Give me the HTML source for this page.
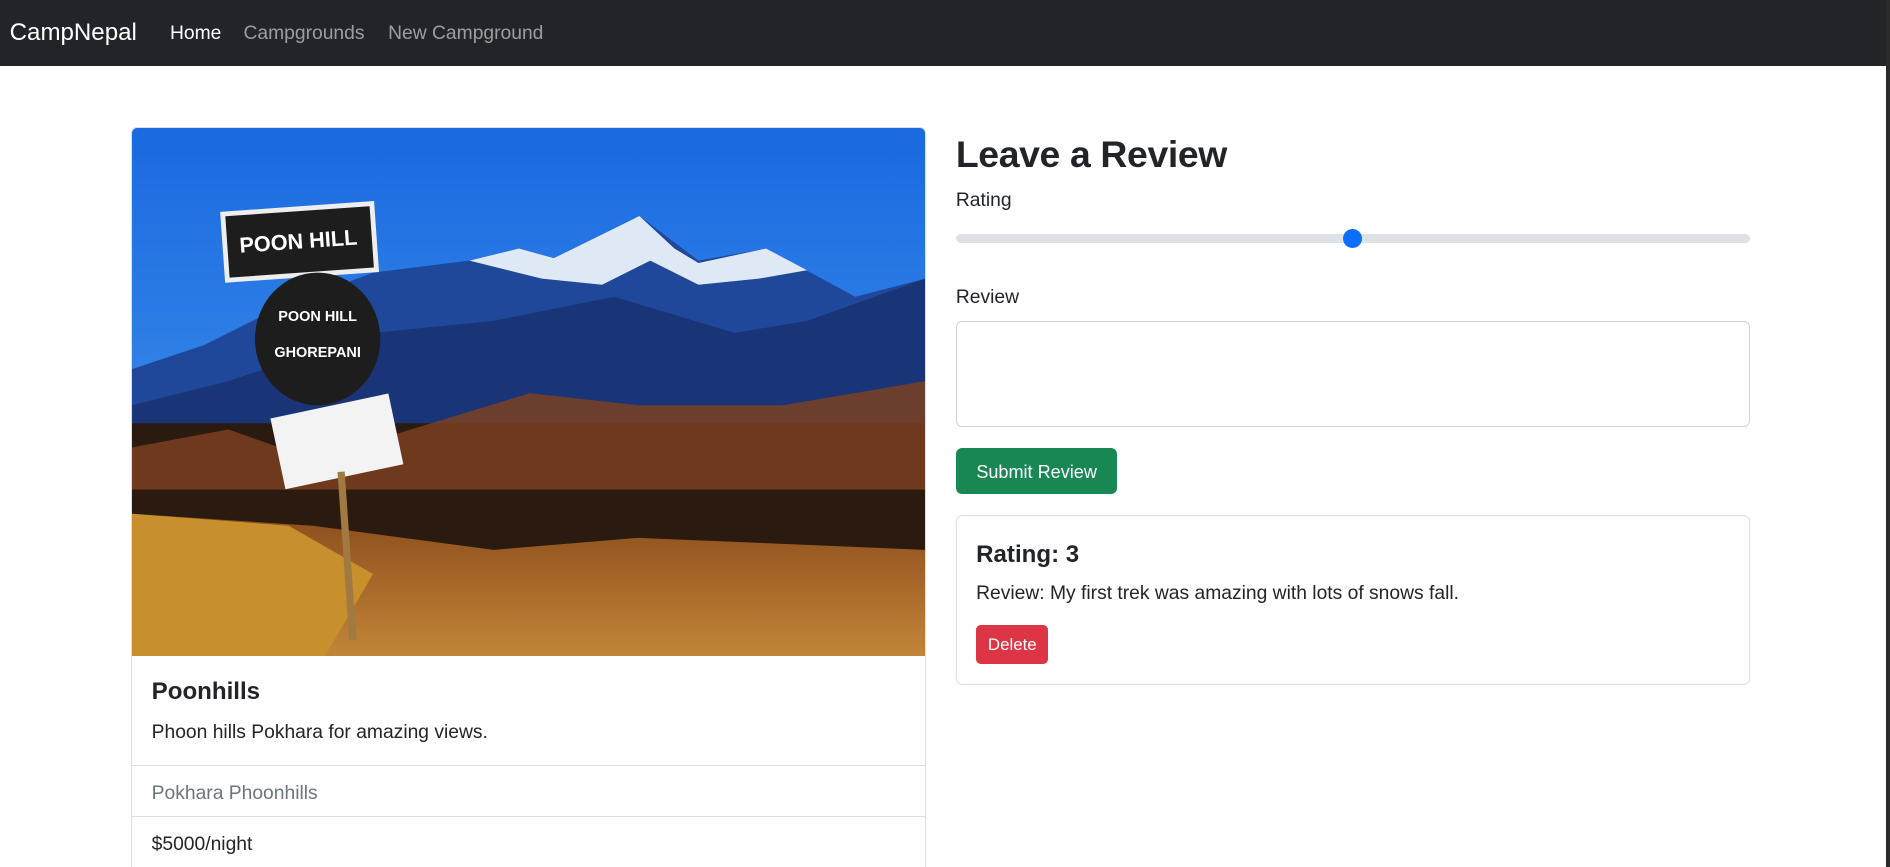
<!DOCTYPE html>
<html><head><meta charset="utf-8"><style>
*{box-sizing:border-box;margin:0;padding:0}
html,body{width:1890px;height:867px;overflow:hidden;background:#fff}
#w{zoom:1.20536;width:1568px;height:720px;position:relative;font-family:"Liberation Sans",sans-serif;color:#212529;font-size:16px}
.nav{position:absolute;left:0;top:0;width:1565px;height:55px;background:#212529}
.nav span{position:absolute;top:19px;font-size:16px;color:rgba(255,255,255,.55)}
.sb{position:absolute;left:1565px;top:0;width:3px;height:720px;background:#2b2b2b}
.card{position:absolute;left:109px;top:105px;width:659px;height:640px;border:1px solid #dfdfdf;border-radius:5px;overflow:hidden}
.abs{position:absolute}
.hr{position:absolute;left:0;width:100%;height:1px;background:#dfdfdf}
</style></head><body><div id="w">
<div class="nav">
<span style="left:8px;top:16px;font-size:20px;color:#fff">CampNepal</span>
<span style="left:141px;color:#fff">Home</span>
<span style="left:202px">Campgrounds</span>
<span style="left:322px">New Campground</span>
</div>
<div class="sb"></div>
<div class="card">
<svg width="658" height="438" viewBox="0 0 658 438" style="display:block">
<defs>
<linearGradient id="sky" x1="0" y1="0" x2="0" y2="1"><stop offset="0" stop-color="#1a6ae0"/><stop offset="1" stop-color="#4a9af0"/></linearGradient>
<linearGradient id="gr" x1="0" y1="0" x2="0" y2="1"><stop offset="0" stop-color="#8a4e1c"/><stop offset=".5" stop-color="#a9682a"/><stop offset="1" stop-color="#c08638"/></linearGradient>
</defs>
<rect width="658" height="438" fill="url(#sky)"/>
<polygon points="0,200 60,180 120,150 200,120 280,110 321,100 350,108 421,73 470,110 526,100 600,140 658,125 658,330 0,330" fill="#20489a"/>
<polygon points="280,110 321,100 350,108 421,73 450,100 470,112 526,100 560,118 520,125 470,130 430,110 390,130 340,125" fill="#dfe8f5"/>
<polygon points="0,230 80,210 200,170 300,160 400,140 500,170 560,160 658,125 658,330 0,330" fill="#193577"/>
<rect x="0" y="245" width="658" height="120" fill="#2a1a10"/>
<polygon points="0,265 80,250 150,275 330,220 420,230 540,230 658,210 658,300 0,300" fill="#7a4020" opacity=".85"/>
<polygon points="0,320 150,330 300,350 420,340 658,350 658,438 0,438" fill="url(#gr)"/>
<polygon points="0,320 130,330 200,370 160,438 0,438" fill="#c8902c"/>
<rect x="77" y="67" width="124" height="55" fill="#1d1d1d" stroke="#eee" stroke-width="4" transform="rotate(-4 139 94)"/>
<ellipse cx="154" cy="175" rx="52" ry="55" fill="#1d1d1d"/>
<rect x="120" y="230" width="100" height="60" fill="#f3f3f3" transform="rotate(-12 170 260)"/>
<rect x="175" y="285" width="6" height="140" fill="#a07a40" transform="rotate(-4 178 350)"/>
<text x="138" y="100" fill="#fff" font-size="18" font-weight="bold" text-anchor="middle" font-family="Liberation Sans Narrow,Liberation Sans,sans-serif" transform="rotate(-4 139 94)">POON HILL</text>
<text x="154" y="160" fill="#fff" font-size="12" font-weight="bold" text-anchor="middle">POON HILL</text>
<text x="154" y="190" fill="#fff" font-size="12" font-weight="bold" text-anchor="middle">GHOREPANI</text>
</svg>
<div class="abs" style="left:16px;top:457px;font-size:20px;font-weight:bold">Poonhills</div>
<div class="abs" style="left:16px;top:493px">Phoon hills Pokhara for amazing views.</div>
<div class="hr" style="top:529px"></div>
<div class="abs" style="left:16px;top:544px;color:#6c757d">Pokhara Phoonhills</div>
<div class="hr" style="top:571px"></div>
<div class="abs" style="left:16px;top:586px">$5000/night</div>
</div>
<div class="abs" style="left:793px;top:110px;font-size:31px;font-weight:bold;letter-spacing:-.3px">Leave a Review</div>
<div class="abs" style="left:793px;top:158px">Rating</div>
<div class="abs" style="left:793px;top:194px;width:659px;height:8px;border-radius:4px;background:#dee2e6"></div>
<div class="abs" style="left:1114px;top:190px;width:16px;height:16px;border-radius:50%;background:#0d6efd"></div>
<div class="abs" style="left:793px;top:238px">Review</div>
<div class="abs" style="left:793px;top:266px;width:659px;height:88px;border:1px solid #ced4da;border-radius:5px"></div>
<div class="abs" style="left:793px;top:372px;width:134px;height:38px;border-radius:5px;background:#198754;color:#fff;text-align:center;line-height:40px;font-size:15px">Submit Review</div>
<div class="abs" style="left:793px;top:427px;width:659px;height:141px;border:1px solid #dfdfdf;border-radius:5px">
<div class="abs" style="left:16px;top:21px;font-size:20px;font-weight:bold">Rating: 3</div>
<div class="abs" style="left:16px;top:56px">Review: My first trek was amazing with lots of snows fall.</div>
<div class="abs" style="left:16px;top:91px;width:60px;height:32px;border-radius:4px;background:#dc3545;color:#fff;text-align:center;line-height:34px;font-size:14px">Delete</div>
</div>
</div></body></html>
